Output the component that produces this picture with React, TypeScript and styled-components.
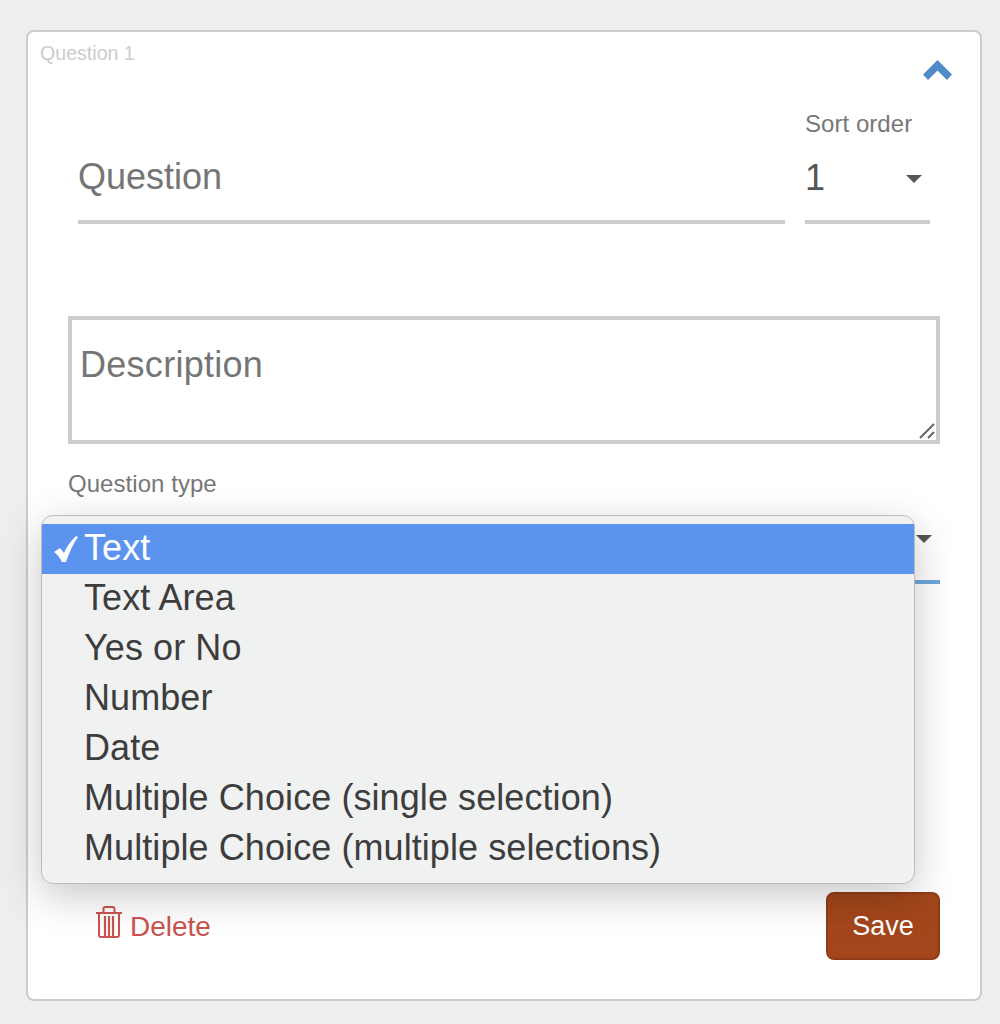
import React from "react";
import styled, { createGlobalStyle } from "styled-components";

const GlobalStyle = createGlobalStyle`
  html, body {
    margin: 0;
    background: #eeeeee;
    font-family: "Liberation Sans", Arial, sans-serif;
  }
  * { box-sizing: border-box; }
`;

const Page = styled.div`
  padding: 30px 18px 23px 26px;
`;

const Card = styled.section`
  width: 956px;
  height: 971px;
  background: #fff;
  border: 2px solid #cccccc;
  border-radius: 8px;
`;

const Header = styled.header`
  display: flex;
  justify-content: space-between;
  align-items: flex-start;
  height: 78px;
  padding: 10px 28px 0 12px;
`;

const Title = styled.h2`
  margin: 0;
  font-size: 19.6px;
  font-weight: 400;
  line-height: 22px;
  color: #cccccc;
`;

const Chevron = styled.svg`
  display: block;
  margin-top: 18px;
`;

const Body = styled.div`
  padding: 0 40px;
`;

const QuestionRow = styled.div`
  display: flex;
  align-items: flex-end;
  gap: 20px;
  margin: 0 10px;
`;

const UnderlinedInput = styled.input`
  flex: 1;
  height: 96px;
  padding: 5px 0 0;
  border: 0;
  border-bottom: 4px solid #cccccc;
  outline: 0;
  font: 400 36px "Liberation Sans", Arial, sans-serif;
  color: #555;
  &::placeholder { color: #757575; opacity: 1; }
`;

const SortColumn = styled.div`
  width: 125px;
`;

const Label = styled.label`
  display: block;
  font-size: 24px;
  line-height: 28px;
  letter-spacing: 0.05px;
  color: #777777;
`;

const SelectBox = styled.div<{ $line: string }>`
  display: flex;
  align-items: center;
  justify-content: space-between;
  height: 86px;
  padding-right: 8px;
  border-bottom: 4px solid ${(p) => p.$line};
  font-size: 36px;
  line-height: 38px;
  color: #555555;
`;

const SelectValue = styled.span`
  margin-bottom: 2px;
`;

const Caret = styled.span`
  width: 0;
  height: 0;
  border-left: 8px solid transparent;
  border-right: 8px solid transparent;
  border-top: 8px solid #555555;
`;

const DescriptionWrap = styled.div`
  position: relative;
  margin-top: 92px;
`;

const Description = styled.textarea`
  display: block;
  width: 100%;
  height: 128px;
  padding: 24px 8px;
  border: 4px solid #cccccc;
  border-radius: 0;
  outline: 0;
  resize: none;
  font: 400 36px "Liberation Sans", Arial, sans-serif;
  letter-spacing: 0.28px;
  &::placeholder { color: #757575; opacity: 1; }
`;

const Grip = styled.svg`
  position: absolute;
  right: 4px;
  bottom: 5px;
`;

const TypeField = styled.div`
  position: relative;
  margin-top: 26px;
`;

const Menu = styled.ul`
  position: absolute;
  top: 45px;
  left: -27px;
  width: 874px;
  margin: 0;
  padding: 8px 0 9px;
  list-style: none;
  background: #f0f1f1;
  border: 1px solid #bdbdbd;
  border-radius: 12px;
  box-shadow: 0 12px 40px rgba(0, 0, 0, 0.22);
`;

const MenuItem = styled.li<{ $active?: boolean }>`
  position: relative;
  height: 50px;
  padding-left: 42px;
  font-size: 36px;
  line-height: 48px;
  letter-spacing: 0.08px;
  color: ${(p) => (p.$active ? "#ffffff" : "#3d3d3d")};
  background: ${(p) => (p.$active ? "#5b93ee" : "transparent")};
`;

const Check = styled.svg`
  position: absolute;
  left: 11px;
  top: 11px;
`;

const Actions = styled.div`
  display: flex;
  align-items: center;
  justify-content: space-between;
  margin-top: 308px;
  padding-left: 28px;
`;

const DeleteButton = styled.button`
  display: flex;
  align-items: center;
  gap: 8px;
  padding: 2px 0 0;
  background: none;
  border: 0;
  font: 400 28px "Liberation Sans", Arial, sans-serif;
  color: #c9534f;
`;

const TrashIcon = styled.svg`
  display: block;
  margin-bottom: 10px;
`;

const SaveButton = styled.button`
  width: 114px;
  height: 68px;
  background: #a3461b;
  border: 2px solid #8f3d17;
  border-radius: 8px;
  font: 400 27px "Liberation Sans", Arial, sans-serif;
  color: #ffffff;
`;

const options = [
  "Text",
  "Text Area",
  "Yes or No",
  "Number",
  "Date",
  "Multiple Choice (single selection)",
  "Multiple Choice (multiple selections)",
];

const App = () => (
  <Page>
    <GlobalStyle />
    <Card>
      <Header>
        <Title>Question 1</Title>
        <Chevron width="29" height="20" viewBox="0 0 29 20">
          <path d="M14.5 0 29 14.5 24 20 14.5 10.5 5 20 0 14.5Z" fill="#4f8ac9" />
        </Chevron>
      </Header>
      <Body>
        <QuestionRow>
          <UnderlinedInput placeholder="Question" />
          <SortColumn>
            <Label>Sort order</Label>
            <SelectBox $line="#cccccc">
              <SelectValue>1</SelectValue>
              <Caret />
            </SelectBox>
          </SortColumn>
        </QuestionRow>
        <DescriptionWrap>
          <Description placeholder="Description" />
          <Grip width="18" height="16" viewBox="0 0 18 16" stroke="#666666" strokeWidth="2">
            <path d="M2 15 16 1M10 15 16 9" />
          </Grip>
        </DescriptionWrap>
        <TypeField>
          <Label>Question type</Label>
          <SelectBox $line="#6fa8dc">
            <SelectValue />
            <Caret />
          </SelectBox>
          <Menu>
            {options.map((option, i) => (
              <MenuItem key={option} $active={i === 0}>
                {i === 0 && (
                  <Check width="26" height="28" viewBox="0 0 26 28">
                    <path
                      d="M1 17 7 13 11 18C14 11 18 6 23 1L25 2C20 9 16 18 13 27H9C7 23 4 19 1 17Z"
                      fill="#ffffff"
                    />
                  </Check>
                )}
                {option}
              </MenuItem>
            ))}
          </Menu>
        </TypeField>
        <Actions>
          <DeleteButton>
            <TrashIcon width="26" height="32" viewBox="0 0 26 32" fill="none" stroke="#c9534f" strokeWidth="2">
              <path d="M0 7H26" />
              <path d="M7.500 6V3C7.500 2 8.500 1 9.500 1H16.500C17.500 1 18.500 2 18.500 3V6" />
              <path d="M3 7V29C3 30 4 31 5 31H21C22 31 23 30 23 29V7" />
              <path d="M9 10V30M13 10V30M17 10V30" strokeWidth="2.200" />
            </TrashIcon>
            Delete
          </DeleteButton>
          <SaveButton>Save</SaveButton>
        </Actions>
      </Body>
    </Card>
  </Page>
);

export default App;
